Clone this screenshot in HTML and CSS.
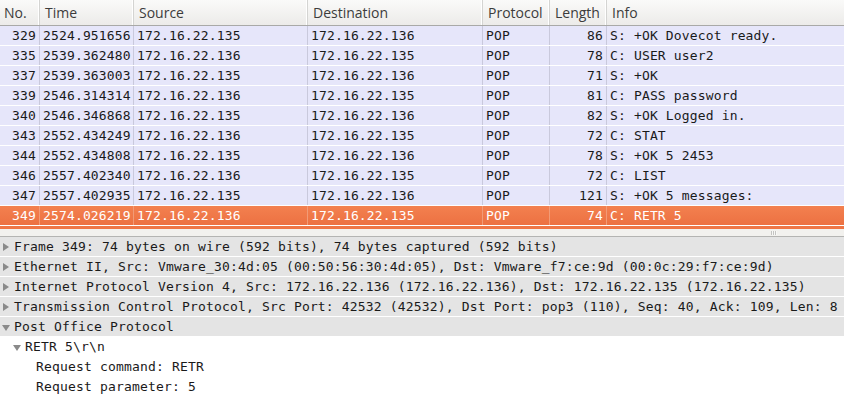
FILE: index.html
```html
<!DOCTYPE html>
<html>
<head>
<meta charset="utf-8">
<title>Wireshark - POP capture</title>
<link rel="stylesheet" href="styles.css">
</head>
<body>
<div class="packets">
    <div class="row head">
        <div class="c">No.</div>
        <div class="c">Time</div>
        <div class="c">Source</div>
        <div class="c">Destination</div>
        <div class="c">Protocol</div>
        <div class="c">Length</div>
        <div class="c">Info</div>
    </div>
    <div class="row"><div class="c r">329</div><div class="c">2524.951656</div><div class="c">172.16.22.135</div><div class="c">172.16.22.136</div><div class="c">POP</div><div class="c r">86</div><div class="c">S: +OK Dovecot ready.</div></div>
    <div class="row"><div class="c r">335</div><div class="c">2539.362480</div><div class="c">172.16.22.136</div><div class="c">172.16.22.135</div><div class="c">POP</div><div class="c r">78</div><div class="c">C: USER user2</div></div>
    <div class="row"><div class="c r">337</div><div class="c">2539.363003</div><div class="c">172.16.22.135</div><div class="c">172.16.22.136</div><div class="c">POP</div><div class="c r">71</div><div class="c">S: +OK</div></div>
    <div class="row"><div class="c r">339</div><div class="c">2546.314314</div><div class="c">172.16.22.136</div><div class="c">172.16.22.135</div><div class="c">POP</div><div class="c r">81</div><div class="c">C: PASS password</div></div>
    <div class="row"><div class="c r">340</div><div class="c">2546.346868</div><div class="c">172.16.22.135</div><div class="c">172.16.22.136</div><div class="c">POP</div><div class="c r">82</div><div class="c">S: +OK Logged in.</div></div>
    <div class="row"><div class="c r">343</div><div class="c">2552.434249</div><div class="c">172.16.22.136</div><div class="c">172.16.22.135</div><div class="c">POP</div><div class="c r">72</div><div class="c">C: STAT</div></div>
    <div class="row"><div class="c r">344</div><div class="c">2552.434808</div><div class="c">172.16.22.135</div><div class="c">172.16.22.136</div><div class="c">POP</div><div class="c r">78</div><div class="c">S: +OK 5 2453</div></div>
    <div class="row"><div class="c r">346</div><div class="c">2557.402340</div><div class="c">172.16.22.136</div><div class="c">172.16.22.135</div><div class="c">POP</div><div class="c r">72</div><div class="c">C: LIST</div></div>
    <div class="row"><div class="c r">347</div><div class="c">2557.402935</div><div class="c">172.16.22.135</div><div class="c">172.16.22.136</div><div class="c">POP</div><div class="c r">121</div><div class="c">S: +OK 5 messages:</div></div>
    <div class="row sel"><div class="c r">349</div><div class="c">2574.026219</div><div class="c">172.16.22.136</div><div class="c">172.16.22.135</div><div class="c">POP</div><div class="c r">74</div><div class="c">C: RETR 5</div></div>
    <div class="row stub"></div>
</div>

<div class="splitter"><span class="grip"></span></div>

<div class="details">
    <div class="node top"><span class="tri"></span>Frame 349: 74 bytes on wire (592 bits), 74 bytes captured (592 bits)</div>
    <div class="node top"><span class="tri"></span>Ethernet II, Src: Vmware_30:4d:05 (00:50:56:30:4d:05), Dst: Vmware_f7:ce:9d (00:0c:29:f7:ce:9d)</div>
    <div class="node top"><span class="tri"></span>Internet Protocol Version 4, Src: 172.16.22.136 (172.16.22.136), Dst: 172.16.22.135 (172.16.22.135)</div>
    <div class="node top"><span class="tri"></span>Transmission Control Protocol, Src Port: 42532 (42532), Dst Port: pop3 (110), Seq: 40, Ack: 109, Len: 8</div>
    <div class="node top"><span class="tri open"></span>Post Office Protocol</div>
    <div class="node lvl1"><span class="tri open"></span>RETR 5\r\n</div>
    <div class="node lvl2">Request command: RETR</div>
    <div class="node lvl2">Request parameter: 5</div>
</div>
</body>
</html>
```

FILE: styles.css
```css
body {
    margin: 0;
    background: #fff;
    color: #1a1a1a;
    font-family: "DejaVu Sans Mono", monospace;
    font-size: 13px;
    overflow: hidden;
}

.packets {
    background: #fff;
}

.row {
    display: grid;
    grid-template-columns: 40px 94px 174px 175px 67px 57px 1fr;
    height: 19px;
    line-height: 20px;
    background: #e6e6fa;
    border-bottom: 1px solid #fff;
    white-space: nowrap;
    letter-spacing: 0.15px;
}

.row .c {
    padding: 0 3px;
    border-right: 1px solid #c9c9dc;
    overflow: hidden;
}

.row .c:last-child {
    border-right: 0;
}

.row .r {
    text-align: right;
}

.row.head {
    height: 25px;
    line-height: 26px;
    background: linear-gradient(#fafaf9, #ecebe9);
    border-bottom: 1px solid #a9a9a7;
    font-family: "Open Sans", sans-serif;
    font-size: 14px;
    letter-spacing: 0;
    color: #3c3c3c;
}

.row.head .c {
    padding: 0 5px;
    border-right: 1px solid #d4d4d2;
    box-shadow: inset -1px 0 0 #fff;
}

.row.head .c:first-child {
    padding-left: 4px;
}

.row.head .c:last-child {
    border-right: 0;
    box-shadow: none;
}

.row.sel {
    background: linear-gradient(#f3804f, #ec7142);
    color: #fff;
}

.row.sel .c {
    border-right-color: #f29b76;
}

.row.stub {
    height: 3px;
    background: #ef7646;
    border-bottom: 0;
}

.splitter {
    height: 7px;
    background: #f2f1ee;
    border-bottom: 1px solid #b4b4b2;
    display: flex;
    justify-content: flex-end;
    padding-right: 67px;
}

.grip {
    width: 6px;
    height: 4px;
    margin-top: 2px;
    background: repeating-linear-gradient(90deg, #c4c4c2 0 1px, #f8f8f6 1px 2px);
}

.details {
    letter-spacing: 0.17px;
}

.node {
    height: 19px;
    line-height: 20px;
    border-bottom: 1px solid #fff;
    white-space: nowrap;
    display: flex;
}

.node.top {
    background: #e4e4e4;
    padding-left: 14px;
}

.tri {
    width: 0;
    height: 0;
    margin: 6px 0 0 -11px;
    margin-right: 5px;
    border-left: 6px solid #8a8a8a;
    border-top: 4px solid transparent;
    border-bottom: 4px solid transparent;
}

.tri.open {
    margin: 8px 4px 0 -12px;
    border-top: 6px solid #8a8a8a;
    border-left: 4px solid transparent;
    border-right: 4px solid transparent;
    border-bottom: 0;
}

.node.lvl1 {
    padding-left: 25px;
}

.node.lvl2 {
    padding-left: 36px;
}
```
